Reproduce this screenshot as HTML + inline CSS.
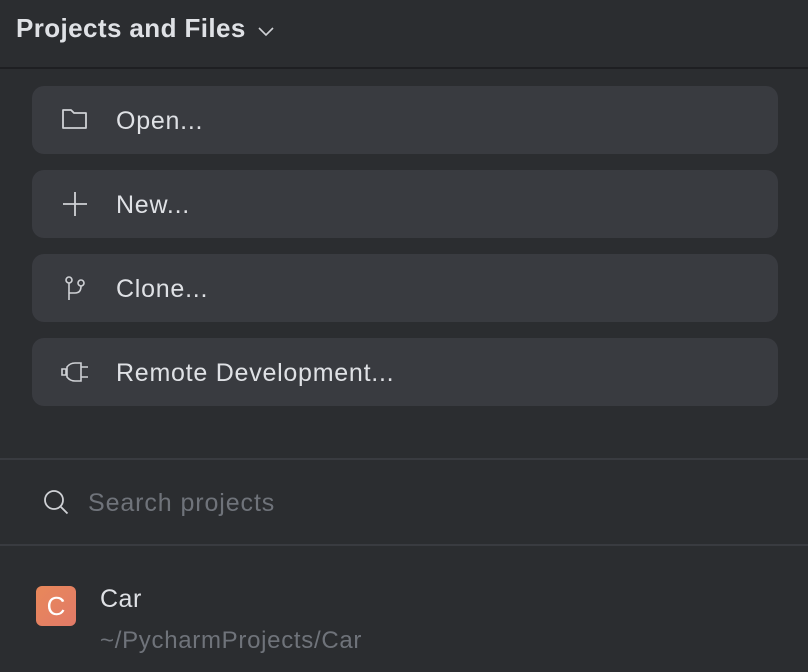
<!DOCTYPE html>
<html><head><style>
body{margin:0;width:808px;height:672px;background:#2b2d30;font-family:"Liberation Sans",sans-serif;color:#dfe1e5;overflow:hidden;position:relative}
.h{position:absolute;left:16px;top:13px;font-size:26px;font-weight:bold;color:#dfe1e5;letter-spacing:0.4px}
.hl{position:absolute;left:0;top:67px;width:808px;height:2px;background:#1e1f22}
.b{position:absolute;left:32px;width:746px;height:68px;background:#393b40;border-radius:12px}
.b span{position:absolute;left:116px;top:21px;font-size:25px;color:#dfe1e5;letter-spacing:0.75px;left:84px}
.b svg{position:absolute;left:28px;top:20px}
.sep{position:absolute;left:0;width:808px;height:2px;background:#393b40}
</style></head><body>
<div class="h">Projects and Files <svg width="18" height="12" style="margin-left:4px" viewBox="0 0 18 12"><path d="M2 3l7 7 7-7" fill="none" stroke="#cfd1d5" stroke-width="1.6"/></svg></div>
<div class="hl"></div>
<div class="b" style="top:86px"><svg width="30" height="28" viewBox="0 0 30 28"><path d="M3 4h8l3 3h12v15H3z" fill="none" stroke="#cfd1d5" stroke-width="1.8" stroke-linejoin="round"/></svg><span>Open...</span></div>
<div class="b" style="top:170px"><svg width="30" height="28" viewBox="0 0 30 28"><path d="M15 2v24M3 14h24" stroke="#cfd1d5" stroke-width="1.8"/></svg><span>New...</span></div>
<div class="b" style="top:254px"><svg width="30" height="28" viewBox="0 0 30 28"><circle cx="9" cy="6" r="3" fill="none" stroke="#cfd1d5" stroke-width="1.6"/><circle cx="21" cy="9" r="3" fill="none" stroke="#cfd1d5" stroke-width="1.6"/><path d="M9 9v17M9 19h6q6 0 6-7" fill="none" stroke="#cfd1d5" stroke-width="1.6"/></svg><span>Clone...</span></div>
<div class="b" style="top:338px"><svg width="34" height="28" viewBox="0 0 34 28"><path d="M2 11h4v6H2zM7 9q3-4 8-4h6v18h-6q-5 0-8-4zM21 9h7M21 19h7" fill="none" stroke="#cfd1d5" stroke-width="1.6"/></svg><span>Remote Development...</span></div>
<div class="sep" style="top:458px"></div>
<svg style="position:absolute;left:42px;top:488px" width="28" height="28" viewBox="0 0 28 28"><circle cx="12" cy="12" r="9" fill="none" stroke="#cfd1d5" stroke-width="1.8"/><path d="M18.5 18.5l7 7" stroke="#cfd1d5" stroke-width="1.8"/></svg>
<div style="position:absolute;left:88px;top:489px;font-size:25px;letter-spacing:0.9px;color:#6f737a">Search projects</div>
<div class="sep" style="top:544px"></div>
<div style="position:absolute;left:36px;top:586px;width:40px;height:40px;border-radius:6px;background:linear-gradient(135deg,#e8885a,#e27a68);color:#fff;font-size:26px;text-align:center;line-height:40px;font-family:'Liberation Sans Narrow','Liberation Sans',sans-serif">C</div>
<div style="position:absolute;left:100px;top:585px;font-size:25px;letter-spacing:0.5px;color:#dfe1e5">Car</div>
<div style="position:absolute;left:100px;top:627px;font-size:24px;letter-spacing:0.7px;color:#6f737a">~/PycharmProjects/Car</div>
</body></html>
